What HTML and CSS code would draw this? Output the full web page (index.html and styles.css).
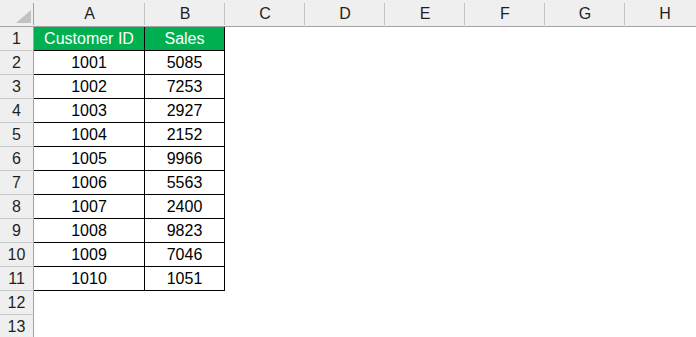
FILE: index.html
```html
<!DOCTYPE html>
<html>
<head>
<meta charset="utf-8">
<link rel="stylesheet" href="styles.css">
</head>
<body>
<div class="sheet">
  <div class="corner"><span class="tri"></span></div>
  <div class="colhead">A</div>
  <div class="colhead">B</div>
  <div class="colhead">C</div>
  <div class="colhead">D</div>
  <div class="colhead">E</div>
  <div class="colhead">F</div>
  <div class="colhead">G</div>
  <div class="colhead">H</div>

  <div class="rowhead">1</div><div class="cell head">Customer ID</div><div class="cell head">Sales</div><div class="blank"></div><div class="blank"></div><div class="blank"></div><div class="blank"></div><div class="blank"></div><div class="blank"></div>
  <div class="rowhead">2</div><div class="cell">1001</div><div class="cell">5085</div><div class="blank"></div><div class="blank"></div><div class="blank"></div><div class="blank"></div><div class="blank"></div><div class="blank"></div>
  <div class="rowhead">3</div><div class="cell">1002</div><div class="cell">7253</div><div class="blank"></div><div class="blank"></div><div class="blank"></div><div class="blank"></div><div class="blank"></div><div class="blank"></div>
  <div class="rowhead">4</div><div class="cell">1003</div><div class="cell">2927</div><div class="blank"></div><div class="blank"></div><div class="blank"></div><div class="blank"></div><div class="blank"></div><div class="blank"></div>
  <div class="rowhead">5</div><div class="cell">1004</div><div class="cell">2152</div><div class="blank"></div><div class="blank"></div><div class="blank"></div><div class="blank"></div><div class="blank"></div><div class="blank"></div>
  <div class="rowhead">6</div><div class="cell">1005</div><div class="cell">9966</div><div class="blank"></div><div class="blank"></div><div class="blank"></div><div class="blank"></div><div class="blank"></div><div class="blank"></div>
  <div class="rowhead">7</div><div class="cell">1006</div><div class="cell">5563</div><div class="blank"></div><div class="blank"></div><div class="blank"></div><div class="blank"></div><div class="blank"></div><div class="blank"></div>
  <div class="rowhead">8</div><div class="cell">1007</div><div class="cell">2400</div><div class="blank"></div><div class="blank"></div><div class="blank"></div><div class="blank"></div><div class="blank"></div><div class="blank"></div>
  <div class="rowhead">9</div><div class="cell">1008</div><div class="cell">9823</div><div class="blank"></div><div class="blank"></div><div class="blank"></div><div class="blank"></div><div class="blank"></div><div class="blank"></div>
  <div class="rowhead">10</div><div class="cell">1009</div><div class="cell">7046</div><div class="blank"></div><div class="blank"></div><div class="blank"></div><div class="blank"></div><div class="blank"></div><div class="blank"></div>
  <div class="rowhead">11</div><div class="cell">1010</div><div class="cell">1051</div><div class="blank"></div><div class="blank"></div><div class="blank"></div><div class="blank"></div><div class="blank"></div><div class="blank"></div>
  <div class="rowhead">12</div><div class="blank"></div><div class="blank"></div><div class="blank"></div><div class="blank"></div><div class="blank"></div><div class="blank"></div><div class="blank"></div><div class="blank"></div>
  <div class="rowhead">13</div><div class="blank"></div><div class="blank"></div><div class="blank"></div><div class="blank"></div><div class="blank"></div><div class="blank"></div><div class="blank"></div><div class="blank"></div>
</div>
</body>
</html>
```
FILE: styles.css
```css
html, body {
  margin: 0;
  padding: 0;
  background: #ffffff;
  overflow: hidden;
}

.sheet {
  display: grid;
  grid-template-columns: 34px 111px repeat(7, 80px);
  grid-template-rows: 27px;
  grid-auto-rows: 24px;
  width: 705px;
  font-family: "Liberation Sans", Arial, sans-serif;
  font-size: 16px;
  white-space: nowrap;
}

.corner,
.colhead {
  box-sizing: border-box;
  background:
    linear-gradient(#c4c4c4, #c4c4c4) right 3px / 1px calc(100% - 4px) no-repeat,
    #efefef;
  border-bottom: 1px solid #a3a3a3;
  display: flex;
  align-items: center;
  justify-content: center;
  color: #1f1f1f;
  padding-top: 2px;
}

.corner {
  background:
    linear-gradient(#a3a3a3, #a3a3a3) right 3px / 1px calc(100% - 4px) no-repeat,
    #efefef;
  justify-content: flex-end;
  align-items: flex-end;
  padding: 0 3px 3px 0;
}

.tri {
  width: 0;
  height: 0;
  border-style: solid;
  border-width: 0 0 13px 15px;
  border-color: transparent transparent #c2c2c2 transparent;
}

.rowhead {
  box-sizing: border-box;
  background: #efefef;
  border-right: 1px solid #a3a3a3;
  border-bottom: 1px solid #c8c8c8;
  display: flex;
  align-items: center;
  justify-content: center;
  color: #1f1f1f;
  padding-top: 1px;
}

.cell {
  box-sizing: border-box;
  border-right: 1px solid #000000;
  border-bottom: 1px solid #000000;
  display: flex;
  align-items: center;
  justify-content: center;
  color: #000000;
  padding-top: 1px;
}

.cell.head {
  background: #00b050;
  color: #ffffff;
}

.blank {
  background: #ffffff;
}
```
